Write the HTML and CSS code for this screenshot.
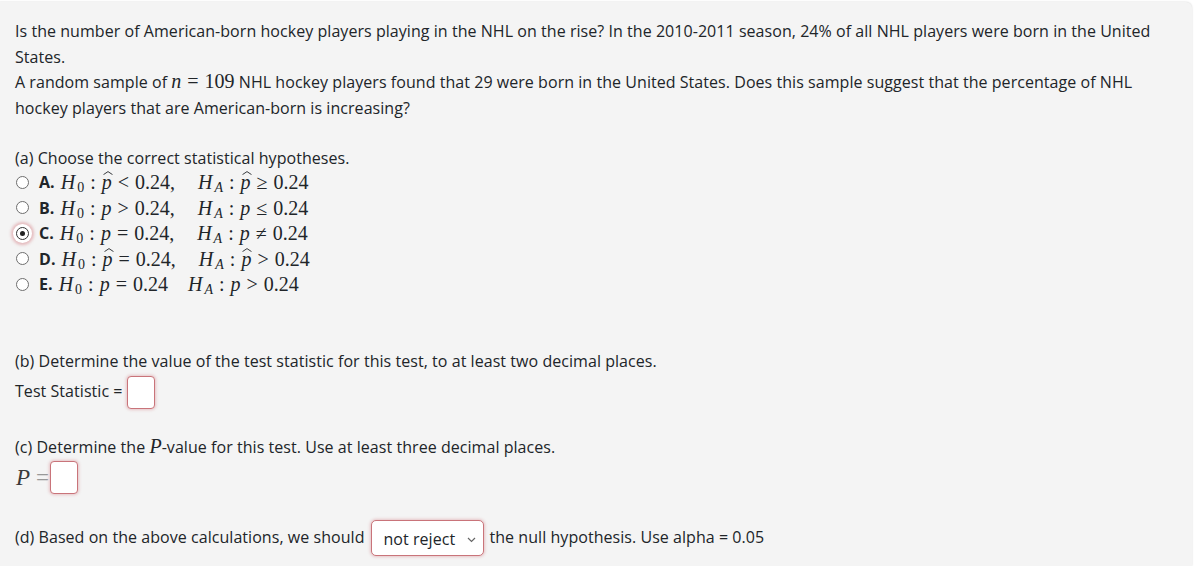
FILE: index.html
```html
<!DOCTYPE html>
<html>
<head>
<meta charset="utf-8">
<link rel="stylesheet" href="styles.css">
</head>
<body>
<div class="card">
  <p class="intro">Is the number of American-born hockey players playing in the NHL on the rise? In the 2010-2011 season, 24% of all NHL players were born in the United States.<br>A random sample of <span class="m"><i>n</i><span class="rel">=</span>109</span> NHL hockey players found that 29 were born in the United States. Does this sample suggest that the percentage of NHL hockey players that are American-born is increasing?</p>

  <div class="part-a">
    <div class="line">(a) Choose the correct statistical hypotheses.</div>
    <ul class="opts">
      <li><span class="radio"></span><b>A.</b><span class="m"><i>H</i><sub>0</sub><span class="rel">:</span><span class="hat"><i>p</i><svg viewBox="0 0 10 4" width="10" height="4"><path d="M0.5 3.6L5 0.6L9.5 3.6" fill="none" stroke="#212529" stroke-width="0.9"/></svg></span><span class="rel">&lt;</span>0.24,<span class="sp"></span><i>H</i><sub class="i">A</sub><span class="rel">:</span><span class="hat"><i>p</i><svg viewBox="0 0 10 4" width="10" height="4"><path d="M0.5 3.6L5 0.6L9.5 3.6" fill="none" stroke="#212529" stroke-width="0.9"/></svg></span><span class="rel">≥</span>0.24</span></li>
      <li><span class="radio"></span><b>B.</b><span class="m"><i>H</i><sub>0</sub><span class="rel">:</span><i>p</i><span class="rel">&gt;</span>0.24,<span class="sp"></span><i>H</i><sub class="i">A</sub><span class="rel">:</span><i>p</i><span class="rel">≤</span>0.24</span></li>
      <li><span class="radio on"></span><b>C.</b><span class="m"><i>H</i><sub>0</sub><span class="rel">:</span><i>p</i><span class="rel">=</span>0.24,<span class="sp"></span><i>H</i><sub class="i">A</sub><span class="rel">:</span><i>p</i><span class="rel">≠</span>0.24</span></li>
      <li><span class="radio"></span><b>D.</b><span class="m"><i>H</i><sub>0</sub><span class="rel">:</span><span class="hat"><i>p</i><svg viewBox="0 0 10 4" width="10" height="4"><path d="M0.5 3.6L5 0.6L9.5 3.6" fill="none" stroke="#212529" stroke-width="0.9"/></svg></span><span class="rel">=</span>0.24,<span class="sp"></span><i>H</i><sub class="i">A</sub><span class="rel">:</span><span class="hat"><i>p</i><svg viewBox="0 0 10 4" width="10" height="4"><path d="M0.5 3.6L5 0.6L9.5 3.6" fill="none" stroke="#212529" stroke-width="0.9"/></svg></span><span class="rel">&gt;</span>0.24</span></li>
      <li><span class="radio"></span><b>E.</b><span class="m"><i>H</i><sub>0</sub><span class="rel">:</span><i>p</i><span class="rel">=</span>0.24<span class="sp sm"></span><i>H</i><sub class="i">A</sub><span class="rel">:</span><i>p</i><span class="rel">&gt;</span>0.24</span></li>
    </ul>
  </div>

  <div class="part-b">
    <div class="line">(b) Determine the value of the test statistic for this test, to at least two decimal places.</div>
    <div class="line ans">Test Statistic =<span class="box"></span></div>
  </div>

  <div class="part-c">
    <div class="line">(c) Determine the <span class="m"><i>P</i></span>-value for this test. Use at least three decimal places.</div>
    <div class="line ans"><span class="pm"><i class="pv">P</i><span class="eq">=</span></span><span class="box bp"></span></div>
  </div>

  <div class="part-d">
    <div class="line ans">(d) Based on the above calculations, we should<span class="select">not reject<svg class="chev" width="9" height="6" viewBox="0 0 9 6"><path d="M1 1l3.5 3.5L8 1" fill="none" stroke="#666" stroke-width="1.2"/></svg></span>the null hypothesis. Use alpha = 0.05</div>
  </div>
</div>
</body>
</html>
```
FILE: styles.css
```css
html, body {
  margin: 0;
  padding: 0;
  background: #ffffff;
}
body {
  font-family: "Open Sans", "Noto Sans", sans-serif;
  font-size: 16px;
  color: #212529;
  letter-spacing: 0.05px;
}
.card {
  margin: 2px 5px 0 -1px;
  background: #f4f4f4;
  border-radius: 0 6px 0 0;
  box-shadow: 0 0 2px rgba(0,0,0,0.18);
  padding: 17px 36px 10px 16px;
  min-height: 560px;
  box-sizing: border-box;
}
.intro {
  margin: 0;
  line-height: 25.5px;
}
.line {
  line-height: 25.5px;
}
.m {
  font-family: "Liberation Serif", "DejaVu Serif", serif;
  font-size: 20px;
  letter-spacing: 0;
  line-height: 1;
  white-space: nowrap;
}
.m i {
  font-style: italic;
}
.m .rel {
  margin: 0 6px;
}
.m sub {
  font-size: 14px;
  font-style: normal;
  vertical-align: -3px;
  line-height: 0;
  margin-left: 2px;
}
.m sub.i {
  font-style: italic;
}
.part-a {
  margin-top: 25px;
}
.opts {
  list-style: none;
  margin: -2px 0 0;
  padding: 0;
}
.opts li {
  display: flex;
  align-items: center;
  height: 25.5px;
  white-space: pre;
}
.opts b {
  font-weight: 700;
  margin-right: 6px;
}
.radio {
  width: 13px;
  height: 13px;
  border: 1px solid #6e6e6e;
  border-radius: 50%;
  margin: 0 10px 0 1px;
  box-sizing: border-box;
  position: relative;
  flex: none;
  background: #fff;
}
.radio.on {
  box-shadow: 0 0 0 3px #fff, 0 0 3px 5px rgba(200,80,90,0.35);
  border-color: #333;
}
.radio.on::after {
  content: "";
  position: absolute;
  left: 3px;
  top: 3px;
  width: 5px;
  height: 5px;
  border-radius: 50%;
  background: #222;
}
.sp {
  display: inline-block;
  width: 23px;
}
.sp.sm {
  width: 20px;
}
.hat {
  position: relative;
  display: inline-block;
}
.hat svg {
  position: absolute;
  left: 1px;
  top: -1px;
}
.part-b {
  margin-top: 52px;
}
.ans {
  display: flex;
  align-items: center;
  white-space: pre;
}
.part-b .ans {
  margin-top: 1px;
}
.box {
  display: inline-block;
  width: 28px;
  height: 33px;
  box-sizing: border-box;
  background: #fff;
  border: 1px solid #c9747a;
  border-radius: 4px;
  box-shadow: 0 0 3px 1px rgba(200,80,90,0.3);
  margin-left: 4px;
}
.box.bp {
  margin-left: 0;
}
.part-c {
  margin-top: 26px;
}
.part-c .ans {
  margin-top: 1px;
}
.pm {
  font-family: "Liberation Serif", "DejaVu Serif", serif;
  font-size: 23px;
  line-height: 1;
  color: #3a3a3a;
  display: inline-flex;
  align-items: center;
  padding-left: 1px;
}
.pv {
  font-style: italic;
  display: inline-block;
  width: 19px;
}
.eq {
  color: #999;
  display: inline-block;
  width: 14px;
  margin-left: 1px;
}
.part-d {
  margin-top: 26px;
}
.select {
  display: inline-flex;
  align-items: center;
  justify-content: space-between;
  width: 113px;
  height: 36px;
  box-sizing: border-box;
  padding: 3px 7px 0 12px;
  margin: 0 6px 0 6px;
  background: #fff;
  border: 1px solid #c9747a;
  border-radius: 5px;
  box-shadow: 0 0 3px 1px rgba(200,80,90,0.3);
}
```
